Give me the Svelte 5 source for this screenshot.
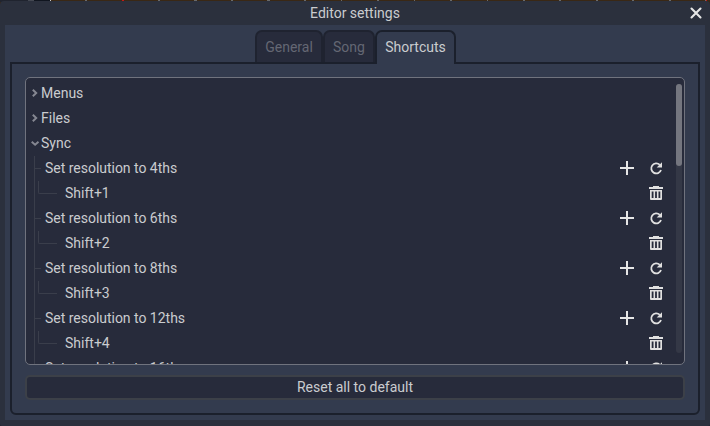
<script>
  const groups = ['Menus', 'Files'];
  const shortcuts = [
    ['Set resolution to 4ths', 'Shift+1'],
    ['Set resolution to 6ths', 'Shift+2'],
    ['Set resolution to 8ths', 'Shift+3'],
    ['Set resolution to 12ths', 'Shift+4'],
    ['Set resolution to 16ths', ''],
  ];
</script>

<div class="backdrop">
  <div class="window">
    <header>
      <span>Editor settings</span>
      <svg class="close" width="12" height="12" viewBox="0 0 12 12">
        <path d="M1.5 1.5l9 9M10.5 1.5l-9 9" fill="none" stroke="#e6e6e6" stroke-width="2.1" stroke-linecap="round" />
      </svg>
    </header>
    <main>
      <nav>
        <div class="tab general">General</div>
        <div class="tab song">Song</div>
        <div class="tab active">Shortcuts</div>
      </nav>
      <section class="panel">
        <div class="tree">
          <div class="rows">
            {#each groups as name}
              <div class="row group">
                <svg class="arrow" width="12" height="13" viewBox="0 0 12 13"><path d="M3.8 2.8L7.2 6 3.8 9.2" /></svg>
                <span>{name}</span>
              </div>
            {/each}
            <div class="row group">
              <svg class="arrow" width="12" height="13" viewBox="0 0 12 13"><path d="M2.7 4.7l3.4 3 3.4-3" /></svg>
              <span>Sync</span>
            </div>
            <div class="children">
              {#each shortcuts as [name, keys]}
                <div class="row action">
                  <i class="branch"></i>
                  <span class="label">{name}</span>
                  <svg class="add" width="16" height="16" viewBox="0 0 16 16"><path d="M7 1h2v6h6v2H9v6H7V9H1V7h6z" fill="#e6e6e6" /></svg>
                  <svg width="16" height="16" viewBox="0 0 16 16">
                    <path d="M11.8 4.9A5 5 0 1 0 13 10" fill="none" stroke="#e0e0e0" stroke-width="1.8" />
                    <path d="M14 2.2v5.3H8.7z" fill="#e0e0e0" />
                  </svg>
                </div>
                {#if keys}
                  <div class="row key">
                    <i class="elbow"></i>
                    <span class="label">{keys}</span>
                    <svg width="16" height="16" viewBox="0 0 16 16">
                      <path d="M5 1h6v1h4v2H1V2h4zM2 5h12v9a1 1 0 0 1-1 1H3a1 1 0 0 1-1-1zM3.7 6.5V13h1.8V6.5zM7.1 6.5V13h1.8V6.5zM10.5 6.5V13h1.8V6.5z" fill="#e0e0e0" fill-rule="evenodd" />
                    </svg>
                  </div>
                {/if}
              {/each}
            </div>
          </div>
          <div class="scrollbar"><div class="thumb"></div></div>
        </div>
        <button>Reset all to default</button>
      </section>
    </main>
  </div>
</div>

<style>
  :global(body) {
    margin: 0;
    overflow: hidden;
  }
  .backdrop {
    box-sizing: border-box;
    width: 710px;
    height: 426px;
    padding-top: 1px;
    background:
      linear-gradient(90deg, #20242f 0 28px, #444852 28px 34px, #10151f 34px 50px, #c8c8c8 50px 51px, transparent 51px 122px, #c01818 122px 124px, transparent 124px 706px, #c01818 706px 707px, transparent 707px) 0 0 / 100% 2px no-repeat,
      repeating-linear-gradient(90deg, transparent 0 12px, #6a6a6a 12px 14px, transparent 14px 36.5px) 0 0 / 100% 2px no-repeat,
      linear-gradient(#3a2815 0 8px, #20242f 8px);
    font: 14px/25px Roboto, sans-serif;
    color: #cacccf;
  }
  .window {
    box-sizing: border-box;
    height: 425px;
    padding: 0 5px 5px;
    background: #2b303d;
    border-radius: 4px 4px 2px 2px;
    display: flex;
    flex-direction: column;
  }
  header {
    height: 24px;
    display: flex;
    justify-content: center;
    align-items: center;
    position: relative;
  }
  .close {
    position: absolute;
    right: 3px;
    top: 6px;
  }
  main {
    box-sizing: border-box;
    height: 395px;
    padding: 5px;
    background: #333b4e;
    display: flex;
    flex-direction: column;
  }
  nav {
    display: flex;
    justify-content: center;
    height: 32px;
    padding-left: 1px;
  }
  .tab {
    box-sizing: border-box;
    height: 32px;
    border: 2px solid #1f2330;
    border-bottom: 0;
    border-radius: 7px 7px 0 0;
    background: #272b3b;
    color: #646773;
    text-align: center;
    line-height: 31px;
  }
  .general {
    width: 68px;
  }
  .song {
    width: 52px;
  }
  .active {
    width: 81px;
    height: 34px;
    background: #333b4e;
    border-color: #1b202c;
    color: #cacccf;
    position: relative;
  }
  .panel {
    box-sizing: border-box;
    flex: 1;
    border: 2px solid #1b202c;
    border-radius: 0 0 6px 6px;
    padding: 13px;
    display: flex;
    flex-direction: column;
    gap: 10px;
  }
  .tree {
    box-sizing: border-box;
    flex: none;
    height: 288px;
    border: 1px solid #70737e;
    border-radius: 5px;
    background: #272b3b;
    overflow: hidden;
    display: flex;
    justify-content: space-between;
    padding: 3px 2px 0 3px;
  }
  .rows {
    width: 640px;
  }
  .row {
    height: 25px;
    display: flex;
    align-items: center;
  }
  .row svg {
    flex: none;
  }
  .arrow path {
    fill: none;
    stroke: #858791;
    stroke-width: 2;
  }
  .children {
    margin-left: 5px;
    border-left: 1px solid #3a3e4b;
  }
  .branch {
    width: 6px;
    height: 1px;
    margin-right: 4px;
    background: #3a3e4b;
  }
  .elbow {
    box-sizing: border-box;
    width: 19px;
    height: 13px;
    margin: 0 8px 12px 3px;
    border: solid #3a3e4b;
    border-width: 0 0 1px 1px;
    border-radius: 0 0 0 2px;
  }
  .label {
    flex: 1;
  }
  .action .label {
    letter-spacing: -0.02px;
  }
  .children svg {
    margin: 0 5px 1px 0;
  }
  .children .add {
    margin-right: 13px;
  }
  .scrollbar {
    width: 6px;
    height: 269px;
    margin-top: 3px;
    border-radius: 3px;
    background: #343846;
  }
  .thumb {
    height: 82px;
    border-radius: 3px;
    background: #74767f;
  }
  button {
    box-sizing: border-box;
    flex: none;
    height: 25px;
    padding: 0 0 1px;
    margin: 0;
    border: 2px solid #3c4048;
    border-radius: 5px;
    background: #272b3b;
    color: inherit;
    font: inherit;
    line-height: 20px;
  }
</style>
